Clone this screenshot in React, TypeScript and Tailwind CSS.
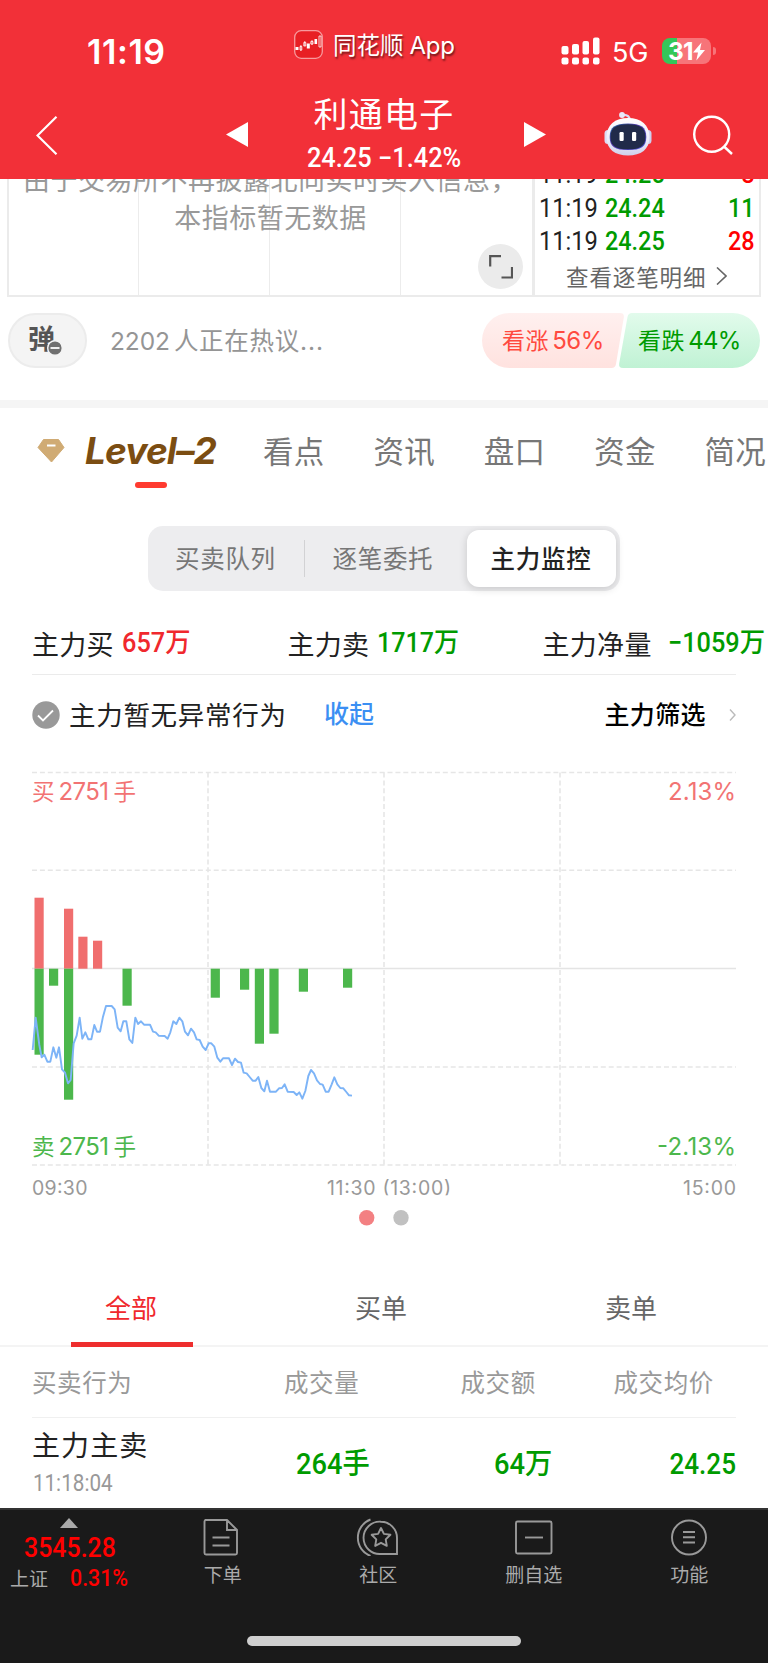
import type { ReactNode } from "react";

const bars = [
  { x: 34.5, buy: 71, sell: 86 },
  { x: 49, buy: 0, sell: 17 },
  { x: 64, buy: 60, sell: 131 },
  { x: 78.3, buy: 32, sell: 0 },
  { x: 93, buy: 28, sell: 0 },
  { x: 122.5, buy: 0, sell: 37 },
  { x: 210.7, buy: 0, sell: 29 },
  { x: 240, buy: 0, sell: 21 },
  { x: 254.8, buy: 0, sell: 75 },
  { x: 269.4, buy: 0, sell: 65 },
  { x: 298.8, buy: 0, sell: 23 },
  { x: 343, buy: 0, sell: 19 },
];

const priceLine =
  "98,870 107,773 118,855 125,892 133,884 142,905 151,905 160,862 169,893 177,862 186,928 195,938 204,970 212,960 221,850 230,827 239,773 247,836 256,817 265,838 274,838 283,795 291,815 300,815 309,770 318,738 335,738 344,748 353,803 362,814 370,784 379,784 388,838 397,849 406,773 414,792 423,784 432,794 450,794 459,815 467,817 476,827 494,828 503,836 511,817 520,784 529,792 538,773 547,784 555,815 564,826 573,806 582,817 590,838 599,840 608,860 617,870 626,850 634,850 643,860 652,893 661,905 669,895 687,895 696,915 705,896 714,906 723,908 731,938 740,940 749,951 758,962 767,962 775,951 784,984 793,994 801,962 810,995 828,995 837,985 846,984 854,973 863,995 881,996 890,1005 898,997 907,1016 916,993 925,948 933,930 942,940 951,961 960,972 968,974 977,995 986,995 995,973 1003,952 1012,973 1021,984 1030,985 1039,996 1047,1006 1056,1007";

const StatusBar = () => {
  return (
    <div className="flex h-[90px] items-start">
      <span className="ml-[87px] mt-8 w-[207px] font-['Inter'] text-[34px] leading-10 font-semibold tracking-[0.6px]">
        11:19
      </span>
      <svg className="mt-[30px] h-[29px] w-[29px]" viewBox="0 0 29 29">
        <rect x="0.7" y="0.7" width="27.6" height="27.6" rx="6.5" fill="#e81f24" stroke="#f79a9d" strokeWidth="1.3" />
        <g fill="#fff">
          <rect x="1.5" y="17" width="3" height="3" />
          <rect x="12.8" y="13.5" width="3" height="5" />
          <rect x="20.5" y="9" width="2.6" height="5" />
        </g>
        <g fill="none" stroke="#fff" strokeWidth="0.8">
          <path d="M6 16.5h1.8v3.500H6zM6.900 15v6M9.800 12.500h2v3.500h-2zM10.800 11v5M16.800 11.500h2.200v2.500h-2.200zM18 10v5M25 6h2v11h-2z" />
        </g>
      </svg>
      <span className="ml-[10px] mt-[27px] w-[228px] text-[23.5px] leading-[34px] whitespace-nowrap [text-shadow:1px_2px_2px_rgba(0,0,0,0.55)]">
        同花顺<span className="ml-1.5 font-['Inter'] text-[24px] tracking-[-0.2px]">App</span>
      </span>
      <svg className="mt-[37px] h-7 w-10" viewBox="0 0 40 28" fill="#fff">
        <rect x="0.5" y="9" width="7" height="8.5" rx="2" />
        <rect x="11" y="7" width="7" height="10.5" rx="2" />
        <rect x="21.5" y="4" width="6.5" height="13.5" rx="2" />
        <rect x="32" y="0.5" width="6.5" height="17" rx="2" />
        <rect x="0.5" y="20.5" width="7" height="7" rx="2" />
        <rect x="11" y="20.5" width="7" height="7" rx="2" />
        <rect x="21.5" y="20.5" width="6.5" height="7" rx="2" />
        <rect x="32" y="20.5" width="6.5" height="7" rx="2" />
      </svg>
      <span className="ml-[11px] mt-[36px] w-[50px] font-['Inter'] text-[27px] leading-[34px] tracking-[-0.2px]">5G</span>
      <div className="mt-[38px] flex h-[26px] w-[49px] items-center rounded-lg bg-[linear-gradient(90deg,#34c759_0_31%,#f77479_31%)] pl-[6px]">
        <span className="font-['Inter'] text-[24.5px] leading-[26px] font-bold tracking-[-0.8px]">31</span>
        <svg className="h-[19px] w-3 shrink-0" viewBox="0 0 12 19" fill="#fff">
          <path d="M8.5 0.5L0 10.5h5L3.3 18.5L12 8H7z" />
        </svg>
      </div>
      <span className="mt-[47px] ml-0.5 h-2 w-[2.5px] rounded-r-full bg-[#f77479]" />
    </div>
  );
};

const Robot = () => {
  return (
    <svg className="h-[46px] w-12" viewBox="0 0 48 46">
      <defs>
        <linearGradient id="shell" x1="0" y1="0" x2="0" y2="1">
          <stop offset="0" stopColor="#ffffff" />
          <stop offset="0.6" stopColor="#ececfa" />
          <stop offset="1" stopColor="#cfd0ea" />
        </linearGradient>
        <linearGradient id="glow" x1="0" y1="0" x2="1" y2="1">
          <stop offset="0" stopColor="#1f6f9c" />
          <stop offset="0.4" stopColor="#5a3fb0" />
          <stop offset="1" stopColor="#4a50d0" />
        </linearGradient>
      </defs>
      <path d="M18 4q7-1 8 5" fill="none" stroke="#dcdcf4" strokeWidth="2.2" />
      <circle cx="18" cy="4" r="2.9" fill="#e9e9fb" />
      <rect x="0.5" y="19" width="7" height="14" rx="3.5" fill="#dcdcf4" />
      <rect x="40.5" y="19" width="7" height="14" rx="3.5" fill="#cfcfee" />
      <path
        d="M24 7C37 7 45.5 14 45.5 26C45.5 38.5 37 44.500 24 44.500C11 44.500 2.500 38.500 2.500 26C2.500 14 11 7 24 7z"
        fill="url(#shell)"
      />
      <path
        d="M24 12.500C37 12.500 42.300 16 42.300 26C42.300 36 37 39 24 39C11 39 5.700 36 5.700 26C5.700 16 11 12.500 24 12.500z"
        fill="url(#glow)"
      />
      <path
        d="M24 13.300C36.500 13.300 41.500 17 41.500 26C41.500 35 36.500 38.300 24 38.300C11.500 38.300 6.500 35 6.500 26C6.500 17 11.500 13.300 24 13.300z"
        fill="#212b4a"
      />
      <rect x="15.5" y="21" width="4.2" height="9" rx="1.2" fill="#fff" />
      <rect x="28" y="21" width="4.2" height="9" rx="1.2" fill="#fff" />
    </svg>
  );
};

const NavBar = () => {
  return (
    <div className="flex h-[89px] items-start">
      <svg className="ml-[36px] mt-[26px] h-[39px] w-[22px]" viewBox="0 0 22 39" fill="none" stroke="#fff" strokeWidth="2.2">
        <path d="M20.5 0.8L1.5 19.5L20.5 38.2" />
      </svg>
      <svg className="ml-[168px] mt-8 h-[25px] w-[22px]" viewBox="0 0 22 25" fill="#fff">
        <path d="M22 0v25L0 12.5z" />
      </svg>
      <div className="ml-[36px] flex w-[200px] flex-col items-center">
        <h1 className="mt-[2px] text-[34px] leading-[42px] tracking-[1.2px]">利通电子</h1>
        <p className="mt-[10px] scale-x-94 font-['Roboto'] text-[27px] leading-7 font-medium whitespace-nowrap">
          24.25 −1.42%
        </p>
      </div>
      <svg className="ml-[40px] mt-8 h-[25px] w-[22px]" viewBox="0 0 22 25" fill="#fff">
        <path d="M0 0v25L22 12.5z" />
      </svg>
      <div className="ml-[58px] mt-[21px] w-12">
        <Robot />
      </div>
      <svg className="ml-[41px] mt-[25px] h-10 w-10" viewBox="0 0 40 40" fill="none" stroke="#fff" strokeWidth="2.4">
        <circle cx="18.7" cy="19.3" r="17.5" />
        <path d="M31 31.5l8 7.5" />
      </svg>
    </div>
  );
};

const Trade = ({ price, volume, up }: { price: string; volume: string; up?: boolean }) => {
  return (
    <div className="flex h-[33.5px] items-center pr-1 pl-1 font-['Roboto'] text-[26px] font-medium">
      <span className="w-[66px] origin-left scale-x-91 font-normal text-[#222]">11:19</span>
      <span className="w-[80px] origin-left scale-x-90 text-[#009b00]">{price}</span>
      <span className={`ml-auto origin-right scale-x-90 ${up ? "text-[#ff0000]" : "text-[#009b00]"}`}>{volume}</span>
    </div>
  );
};

const Intraday = () => {
  return (
    <div className="flex h-[118px] items-end overflow-hidden pl-[7px]">
      <div className="relative flex h-[154px] w-[527px] shrink-0 border-2 border-[#ebebeb]">
        <span className="w-[130px] border-r border-[#ececec]" />
        <span className="w-[131px] border-r border-[#ececec]" />
        <span className="w-[131px] border-r border-[#ececec]" />
        <p className="absolute inset-x-0 top-[15px] text-center text-[27px] leading-[38px] tracking-[0.5px] whitespace-nowrap text-[#999]">
          由于交易所不再披露北向实时买入信息，
          <br />
          本指标暂无数据
        </p>
        <span className="absolute right-[9px] bottom-[6px] flex size-[45px] items-center justify-center rounded-full bg-[#ebebeb]">
          <svg className="size-6" viewBox="0 0 24 24" fill="none" stroke="#555" strokeWidth="2.2">
            <path d="M1.2 11.5V1.2H12M23 12v10.5H12.5" />
          </svg>
        </span>
      </div>
      <div className="h-[154px] w-[227px] shrink-0 border-2 border-l border-[#ebebeb] pt-[13px]">
        <Trade price="24.25" volume="3" up />
        <Trade price="24.24" volume="11" />
        <Trade price="24.25" volume="28" up />
        <div className="-mt-px flex items-center pl-[31px] text-[22.5px] leading-9 tracking-[0.9px] text-[#666]">
          查看逐笔明细
          <svg className="ml-[10px] h-[18px] w-[11px]" viewBox="0 0 11 18" fill="none" stroke="#666" strokeWidth="1.6">
            <path d="M1 0.5L10 9L1 17.5" />
          </svg>
        </div>
      </div>
    </div>
  );
};

const Discussion = () => {
  return (
    <div className="flex h-[103px] items-start pt-4">
      <div className="relative ml-2 flex h-[55px] w-[79px] items-center rounded-full border-2 border-[#ececec] bg-[#f4f4f4] pl-[18px]">
        <span className="-mt-1.5 text-[27px] leading-8 font-bold text-[#555]">弹</span>
        <svg className="absolute top-[25px] left-[37px] size-4" viewBox="0 0 16 16">
          <circle cx="8" cy="8" r="7.3" fill="#707070" stroke="#f4f4f4" strokeWidth="1.4" />
          <path d="M3.5 8h9" stroke="#fff" strokeWidth="1.8" />
        </svg>
      </div>
      <p className="ml-[23px] w-[372px] text-[24.5px] leading-[53px] tracking-[0.7px] whitespace-nowrap text-[#959595]">
        <span className="mr-[4px] font-['Inter'] tracking-[-0.1px]">2202</span>人正在热议
        <span className="font-['Inter'] tracking-[1px]">...</span>
      </p>
      <div className="relative flex h-[55px] w-[278px] items-center text-[23px] whitespace-nowrap">
        <svg className="absolute inset-0 h-[55px] w-[278px]" viewBox="0 0 278 55">
          <defs>
            <linearGradient id="up" x1="0" y1="0" x2="0" y2="1">
              <stop offset="0" stopColor="#fff0ef" />
              <stop offset="1" stopColor="#ffe2df" />
            </linearGradient>
            <linearGradient id="down" x1="0" y1="0" x2="0" y2="1">
              <stop offset="0" stopColor="#e2fbec" />
              <stop offset="1" stopColor="#c0f2d4" />
            </linearGradient>
          </defs>
          <path d="M27.5 0H138q4.5 0 3.8 4.5L134 51q-0.7 4-4.5 4H27.5a27.5 27.5 0 0 1 0-55z" fill="url(#up)" />
          <path d="M150 0H250.5a27.5 27.5 0 0 1 0 55H141q-4.5 0-3.8-4.5L145.5 4q0.7-4 4.5-4z" fill="url(#down)" />
        </svg>
        <span className="relative ml-5 w-[136px] tracking-[0.6px] text-[#ff4a3f]">
          看涨<span className="ml-[3px] font-['Inter'] text-[24px] tracking-[-0.5px]">56%</span>
        </span>
        <span className="relative tracking-[0.6px] text-[#009b00]">
          看跌<span className="ml-[3px] font-['Inter'] text-[24px] tracking-[-0.7px]">44%</span>
        </span>
      </div>
    </div>
  );
};

const MainTabs = () => {
  return (
    <div className="flex h-[118px] items-start overflow-hidden pt-[20px]">
      <svg className="ml-[37px] mt-[10px] h-[26px] w-[28px] shrink-0" viewBox="0 0 28 26">
        <path d="M6.5 1.5H21.5L27 9.5L14.5 24L1 9.5z" fill="#d0ab74" stroke="#d0ab74" strokeLinejoin="round" />
        <path d="M10 7.5h8.5" stroke="#fff" strokeWidth="2" />
      </svg>
      <div className="relative ml-[20px] w-[178px] shrink-0">
        <span className="inline-block font-['Inter'] text-[37px] leading-[46px] font-bold tracking-[-0.9px] whitespace-nowrap text-[#7b4d12] italic">
          Level–2
        </span>
        <span className="absolute top-[54px] left-[50px] h-[6px] w-8 rounded-full bg-[#ff3b30]" />
      </div>
      {["看点", "资讯", "盘口", "资金", "简况"].map((tab) => (
        <span key={tab} className="w-[110.4px] shrink-0 text-[30.5px] leading-[45px] tracking-[0.3px] text-[#777]">
          {tab}
        </span>
      ))}
    </div>
  );
};

const Segments = () => {
  return (
    <div className="ml-[148px] flex h-[65px] w-[472px] items-center rounded-[15px] bg-[#ededef] text-[24.5px] tracking-[0.7px] text-[#777]">
      <span className="w-[155.5px] pl-[27px]">买卖队列</span>
      <span className="h-[37px] w-[1.5px] bg-[#d2d2d4]" />
      <span className="w-[161.5px] pl-[27.5px]">逐笔委托</span>
      <span className="flex h-[57px] w-[149px] items-center justify-center rounded-xl bg-white font-medium text-[#222] shadow-[0_2px_8px_rgba(0,0,0,0.16)]">
        主力监控
      </span>
    </div>
  );
};

const Stat = ({ label, children }: { label: string; children: ReactNode }) => {
  return (
    <div className="flex h-full items-center whitespace-nowrap">
      <span className="-mt-0.5 text-[27px] tracking-[0.3px] text-[#222]">{label}</span>
      <span className="-mt-1 ml-2 font-['Roboto','Noto_Sans_CJK_SC'] text-[27.5px] font-medium">{children}</span>
    </div>
  );
};

const Summary = () => {
  return (
    <div className="h-[169px] shrink-0 pt-[25px]">
      <div className="ml-8 flex h-[58px] w-[736px]">
        <div className="w-[255.5px]">
          <Stat label="主力买">
            <span className="inline-block origin-left scale-x-92 text-[#f0282d]">657万</span>
          </Stat>
        </div>
        <div className="w-[255px]">
          <Stat label="主力卖">
            <span className="inline-block origin-left scale-x-91 text-[#009b00]">1717万</span>
          </Stat>
        </div>
        <Stat label="主力净量">
          <span className="ml-2 inline-block w-[90px] origin-left scale-x-92 text-[#009b00]">−1059万</span>
        </Stat>
      </div>
      <div className="mx-8 flex h-[80px] items-center border-t-[1.5px] border-[#ebebeb]">
        <svg className="size-7" viewBox="0 0 28 28">
          <circle cx="14" cy="14" r="13.7" fill="#999" />
          <path d="M6 14.5l5 5L21 9.5" fill="none" stroke="#fff" strokeWidth="1.8" />
        </svg>
        <span className="-mt-0.5 ml-[9px] w-[255px] text-[26.5px] tracking-[0.7px] text-[#222]">主力暂无异常行为</span>
        <span className="-mt-1 flex-1 text-[25px] font-medium text-[#3b8ff3]">收起</span>
        <span className="-mt-0.5 text-[25px] font-medium tracking-[0.4px] text-black">主力筛选</span>
        <svg className="ml-[23px] h-3 w-[7px]" viewBox="0 0 7 12" fill="none" stroke="#bbb" strokeWidth="1.4">
          <path d="M1 0.5L6 6L1 11.5" />
        </svg>
      </div>
    </div>
  );
};

const FlowChart = () => {
  return (
    <svg className="h-[480px] w-[768px]" viewBox="0 0 768 480">
      <g stroke="#e6e6e6" strokeWidth="1.6" strokeDasharray="5 2.9">
        <path d="M32 12.5H736M32 110.3H736M32 307H736M32 405H736" />
        <path d="M208 12.5V405M384 12.5V405M560 12.5V405" />
      </g>
      <path d="M32 208.5H736" stroke="#e4e4e4" strokeWidth="1.3" />
      {bars.map((bar) => (
        <g key={bar.x}>
          <rect x={bar.x} y={208.7 - bar.buy} width="9.2" height={bar.buy} fill="#f06e6e" />
          <rect x={bar.x} y="208.7" width="9.2" height={bar.sell} fill="#4cb74c" />
        </g>
      ))}
      <polyline
        points={priceLine}
        transform="scale(0.33333)"
        fill="none"
        stroke="#7db4f7"
        strokeWidth="5.8"
        strokeLinejoin="round"
      />
      <g className="font-['Inter','Noto_Sans_CJK_SC']" fontSize="24">
        <g fill="#f27373">
          <text x="32" y="40" fontSize="22.5">买</text>
          <text x="58.5" y="40" textLength="50.5">2751</text>
          <text x="113.5" y="40" fontSize="22.5">手</text>
          <text x="668" y="40" textLength="68">2.13%</text>
        </g>
        <g fill="#4cb74c">
          <text x="32" y="394.5" fontSize="22.5">卖</text>
          <text x="58.5" y="394.5" textLength="50.5">2751</text>
          <text x="113.5" y="394.5" fontSize="22.5">手</text>
          <text x="657" y="394.5" textLength="79">-2.13%</text>
        </g>
      </g>
      <g className="font-['Inter']" fontSize="19.5" fill="#999">
        <text x="32" y="434.5" textLength="55.5">09:30</text>
        <text x="327" y="434.5" textLength="124">11:30 (13:00)</text>
        <text x="683" y="434.5" textLength="53">15:00</text>
      </g>
      {/* label strip ends just under the digits */}
      <rect x="320" y="435.3" width="140" height="6" fill="#fff" />
      <circle cx="366.7" cy="457.7" r="7.7" fill="#f38082" />
      <circle cx="401" cy="457.7" r="7.7" fill="#c1c1c1" />
    </svg>
  );
};

const Orders = () => {
  return (
    <div className="h-[268px]">
      <div className="flex h-[107px] border-b-2 border-[#f4f4f4] px-[6px] text-[26px] text-[#666]">
        <div className="relative flex w-[250px] items-center justify-center pt-[27px] text-[#f0282d]">
          全部
          <span className="absolute -bottom-[2px] left-[65px] h-[5px] w-[122px] bg-[#ee2e2e]" />
        </div>
        <div className="flex w-[250px] items-center justify-center pt-[27px]">买单</div>
        <div className="flex w-[250px] items-center justify-center pt-[27px]">卖单</div>
      </div>
      <div className="mx-8 flex h-[71px] items-center border-b border-[#f0f0f0] text-[24.5px] tracking-[0.6px] text-[#999]">
        <span className="w-[252px]">买卖行为</span>
        <span className="w-[176.5px]">成交量</span>
        <span className="w-[153px]">成交额</span>
        <span>成交均价</span>
      </div>
      <div className="mx-8 flex h-[90px] items-center font-['Roboto','Noto_Sans_CJK_SC'] text-[29px] font-medium text-[#009b00]">
        <div className="w-[264px] pt-1 font-normal">
          <p className="text-[28px] leading-9 tracking-[1.1px] text-[#222]">主力主卖</p>
          <p className="origin-left scale-x-88 pl-px text-[23.5px] leading-9 text-[#999]">11:18:04</p>
        </div>
        <span className="mt-1 w-[198px] origin-left scale-x-94">264手</span>
        <span className="mt-1 w-[80px] origin-left scale-x-94">64万</span>
        <span className="mt-1 ml-auto origin-right scale-x-90">24.25</span>
      </div>
    </div>
  );
};

const NavItem = ({ label, children }: { label: string; children: ReactNode }) => {
  return (
    <div className="flex w-[155.5px] flex-col items-center">
      <svg className="h-10 w-11" viewBox="0 0 44 40" fill="none" stroke="#999" strokeWidth="1.9">
        {children}
      </svg>
      <span className="mt-1 ml-0.5 text-[19px] leading-7 whitespace-nowrap text-[#aaa]">{label}</span>
    </div>
  );
};

const BottomBar = () => {
  return (
    <div className="relative flex h-[155px] items-start border-t-2 border-[#333] bg-[#1a1a1a]">
      <div className="flex w-[144px] flex-col">
        <svg className="mt-2 ml-[60px] h-[10px] w-[18px]" viewBox="0 0 18 10" fill="#aaa">
          <path d="M9 0L18 10H0z" />
        </svg>
        <span className="ml-6 mt-1 origin-left scale-x-89 font-['Roboto'] text-[28px] leading-8 font-medium text-[#ff0000]">
          3545.28
        </span>
        <div className="-mt-px ml-[10px] flex items-center leading-[30px]">
          <span className="w-[60px] text-[19px] text-[#aaa]">上证</span>
          <span className="origin-left scale-x-89 font-['Roboto'] text-[24px] font-medium text-[#ff0000]">0.31%</span>
        </div>
      </div>
      <div className="flex pt-[6px]">
        <NavItem label="下单">
          <path d="M5 4H27L37 14V37q0 1.500-1.500 1.500H6q-1.500 0-1.500-1.500V5.500q0-1.500 1.500-1.500zM27 4V14H37M12.500 21.500H29.500M12.500 29.500H29.500" />
        </NavItem>
        <NavItem label="社区">
          <path d="M26 5.7A16.2 16.2 0 1 0 26 38H42V22A16.2 16.2 0 0 0 26 5.7z" />
          <path d="M15.5 3.5A19.5 19.5 0 0 0 15.5 40" />
          <path
            d="M26 12l2.900 5.900 6.500 0.900-4.700 4.600 1.100 6.500-5.800-3.100-5.800 3.100 1.100-6.500-4.700-4.600 6.500-0.900z"
            strokeLinejoin="round"
          />
        </NavItem>
        <NavItem label="删自选">
          <rect x="5" y="5.5" width="35.5" height="32" rx="1.5" />
          <path d="M14 21.5H32" />
        </NavItem>
        <NavItem label="功能">
          <circle cx="23" cy="21.5" r="17" />
          <path d="M17 16H29M17 21.3H29M17 26.5H29" />
        </NavItem>
      </div>
      <span className="absolute bottom-[17px] left-[247px] h-[10px] w-[274px] rounded-full bg-[#cfcfcf]" />
    </div>
  );
};

const App = () => {
  return (
    <div className="flex h-[1663px] w-[768px] flex-col overflow-hidden bg-white font-['Noto_Sans_CJK_SC',sans-serif] leading-normal">
      <header className="h-[179px] shrink-0 bg-[#f23038] text-white">
        <StatusBar />
        <NavBar />
      </header>
      <Intraday />
      <Discussion />
      <div className="h-2 shrink-0 bg-[#f5f5f5]" />
      <MainTabs />
      <Segments />
      <Summary />
      <FlowChart />
      <Orders />
      <BottomBar />
    </div>
  );
};

export default App;
